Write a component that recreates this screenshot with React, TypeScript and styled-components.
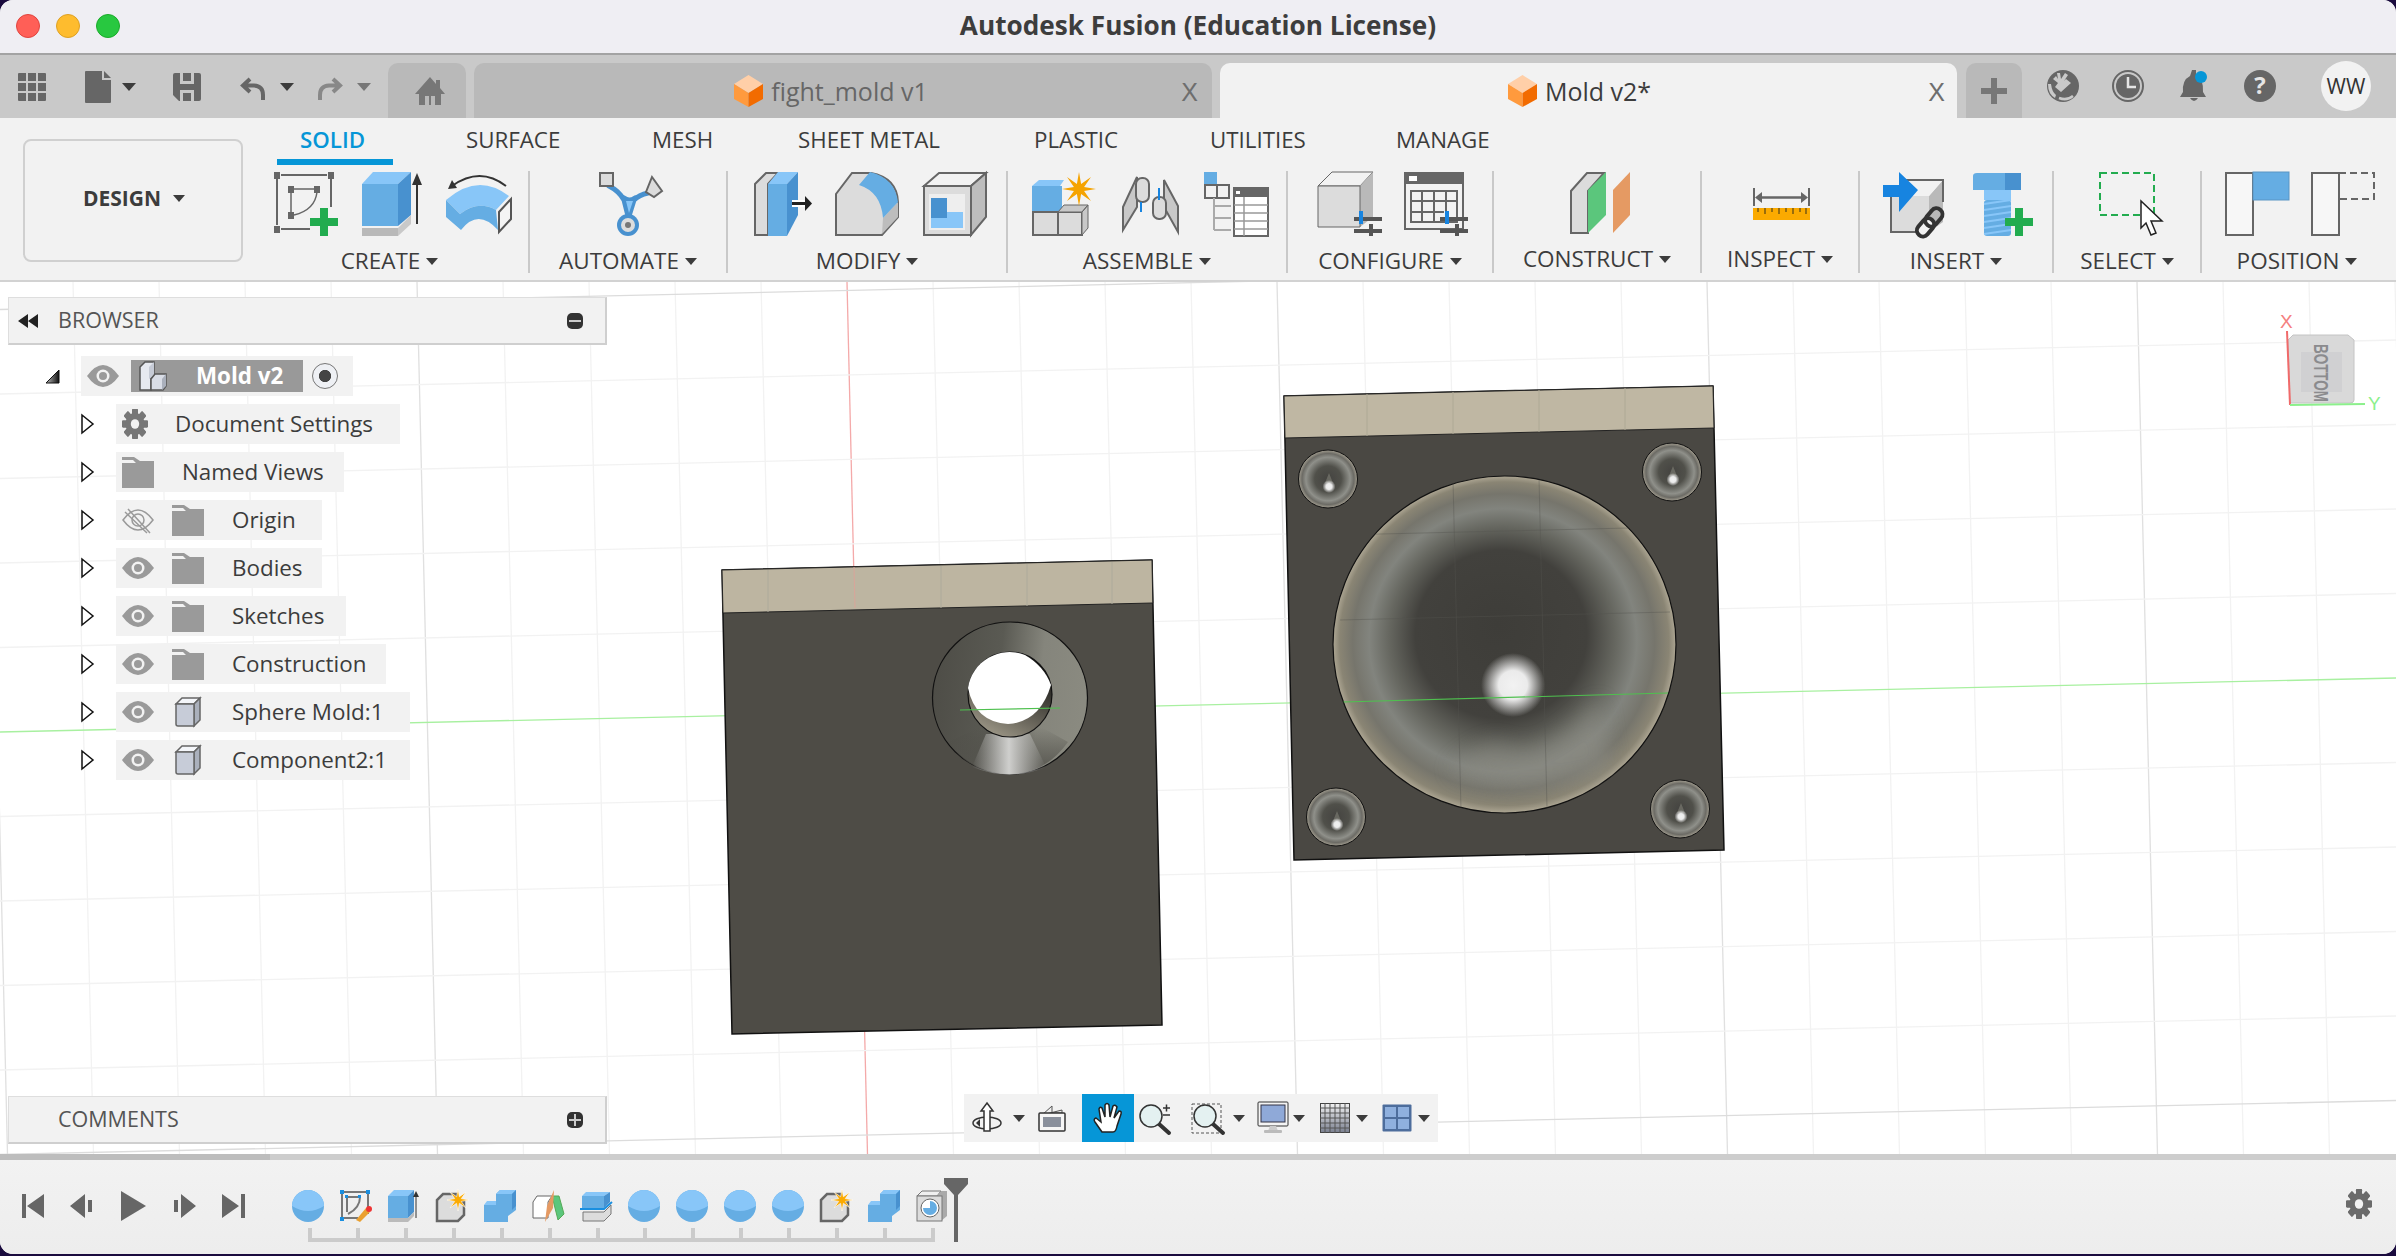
import React from "react";
import styled, { createGlobalStyle } from "styled-components";

const Global = createGlobalStyle`
  html, body { margin: 0; padding: 0; background: #1a0b3e; }
  body { font-family: "Open Sans", "Noto Sans", sans-serif; color: #3c3c3c; }
  * { box-sizing: border-box; }
`;

const Win = styled.div`
  width: 2396px; height: 1254px; display: flex; flex-direction: column;
  overflow: hidden; border-radius: 13px; background: #f2f2f2;
`;
const TitleBar = styled.header`
  height: 55px; flex: none; background: #efeef3; border-bottom: 2px solid #a3a3a3;
  display: flex; align-items: center; position: relative; justify-content: center; padding-bottom: 4px;
`;
const Lights = styled.div`
  position: absolute; left: 16px; top: 14px; display: flex; gap: 16px;
`;
const Light = styled.span<{ $c: string; $b: string }>`
  width: 24px; height: 24px; border-radius: 50%; background: ${p => p.$c}; border: 1px solid ${p => p.$b};
`;
const Title = styled.h1`
  margin: 0; font: 700 26.2px "Open Sans", sans-serif; color: #3d3d3d; letter-spacing: 0;
`;
const TabBar = styled.div`
  height: 63px; flex: none; background: #c9c9c9; display: flex; align-items: stretch; padding-top: 8px;
`;
const QuickTools = styled.div`
  width: 388px; flex: none; display: flex; align-items: flex-start; padding: 8px 0 0 18px;
`;
const QuickSlot = styled.div<{ $ml?: number }>`
  margin-left: ${p => p.$ml ?? 0}px; display: flex; align-items: center; height: 32px;
`;
const Caret = styled.span<{ $ml?: number; $s?: number; $c?: string }>`
  display: inline-block; flex: none; margin-left: ${p => p.$ml ?? 0}px;
  width: 0; height: 0;
  border-left: ${p => p.$s ?? 6}px solid transparent; border-right: ${p => p.$s ?? 6}px solid transparent;
  border-top: ${p => (p.$s ?? 6) * 1.25}px solid ${p => p.$c ?? "#3c3c3c"};
`;
const Tab = styled.div<{ $w: number; $active?: boolean; $ml?: number; $pl?: number; $pr?: number }>`
  width: ${p => p.$w}px; flex: none; margin-left: ${p => p.$ml ?? 0}px;
  padding-left: ${p => p.$pl ?? 0}px; padding-right: ${p => p.$pr ?? 0}px;
  background: ${p => (p.$active ? "#f2f2f2" : "#b9b9b9")};
  border-radius: 10px 10px 0 0; display: flex; align-items: center; justify-content: center; position: relative;
`;
const DocTitle = styled.div<{ $active?: boolean }>`
  display: flex; align-items: center; gap: 8px; font-size: 25px; color: ${p => (p.$active ? "#3c3c3c" : "#666")};
  padding-top: 1px;
`;
const TabClose = styled.span<{ $r: number }>`
  position: absolute; right: ${p => p.$r}px; top: 18px; font-size: 25px; line-height: 22px; color: #6e6e6e;
  font-family: "Liberation Sans", sans-serif;
`;
const RightTools = styled.div`
  display: flex; align-items: flex-start; padding-top: 7px; position: relative; flex: 1;
`;
const ToolSlot = styled.div<{ $ml: number }>`
  margin-left: ${p => p.$ml}px;
`;
const Avatar = styled.div`
  position: absolute; left: 299px; top: -2px; width: 50px; height: 50px; border-radius: 50%;
  background: #f2f2f2; display: flex; align-items: center; justify-content: center; font-size: 21px; color: #333;
`;
const Ribbon = styled.div`
  height: 164px; flex: none; background: #f2f2f2; border-bottom: 2px solid #d2d2d2; display: flex; padding-left: 23px;
`;
const DesignBtn = styled.button`
  width: 220px; height: 123px; margin-top: 21px; background: #f2f2f2; border: 2px solid #d0d0d0; border-radius: 8px;
  display: flex; align-items: center; justify-content: center; gap: 12px;
  font: 700 21px "Open Sans", sans-serif; color: #3c3c3c; padding: 0 0 5px 2px;
`;
const RibbonMain = styled.div`
  display: flex; flex-direction: column; flex: 1; margin-left: 8px;
`;
const RibbonTabs = styled.nav`
  height: 47px; display: flex; position: relative;
`;
const RibbonTab = styled.span<{ $x: number; $active?: boolean }>`
  position: absolute; left: ${p => p.$x}px; top: 8px; font-size: 22.3px; line-height: 28px;
  color: ${p => (p.$active ? "#0696d7" : "#3c3c3c")}; font-weight: ${p => (p.$active ? 600 : 400)};
  &::after { content: ""; display: ${p => (p.$active ? "block" : "none")}; position: absolute; left: -23px; right: -28px; top: 33px; height: 6px; background: #0696d7; }
`;
const Groups = styled.div`
  display: flex; height: 108px; padding-top: 6px;
`;
const Group = styled.div<{ $w: number; $last?: boolean }>`
  width: ${p => p.$w}px; flex: none; height: 102px; display: flex; flex-direction: column; align-items: center;
  border-right: ${p => (p.$last ? "none" : "2px solid #c9c9c9")}; position: relative;
`;
const GroupIcons = styled.div<{ $gap?: number; $h?: number; $dx?: number }>`
  height: 65px; display: flex; gap: ${p => p.$gap ?? 20}px; align-items: flex-start;
  padding-top: ${p => p.$h ?? 1}px; padding-left: ${p => p.$dx ?? 6}px;
`;
const GroupLabel = styled.div`
  display: flex; align-items: center; gap: 6px; font-size: 22.5px; line-height: 28px; color: #3c3c3c; margin-top: 11px;
`;
const Viewport = styled.main`
  flex: 1; position: relative; background: #fff; overflow: hidden;
`;
const Canvas = styled.svg`
  position: absolute; left: 0; top: 0; width: 2396px; height: 872px;
`;
const Panel = styled.section<{ $top: number }>`
  position: absolute; left: 8px; top: ${p => p.$top}px; width: 599px; height: 48px; background: #f2f2f2;
  border-right: 2px solid #cfcfcf; border-bottom: 2px solid #cfcfcf; border-top: 1px solid #dedede; border-left: 1px solid #dedede;
  display: flex; align-items: center; padding: 0 22px 0 9px;
`;
const PanelName = styled.span<{ $ml: number }>`
  font-size: 21.5px; color: #555; margin-left: ${p => p.$ml}px; flex: 1; padding-bottom: 2px;
`;
const Tree = styled.div`
  position: absolute; left: 0; top: 74px; display: flex; flex-direction: column; gap: 8px;
`;
const RowOuter = styled.div<{ $root?: boolean }>`
  display: flex; align-items: center; height: 40px; padding-left: ${p => (p.$root ? 45 : 81)}px; gap: ${p => (p.$root ? 21 : 22)}px;
`;
const Row = styled.div<{ $w: number }>`
  width: ${p => p.$w}px; height: 40px; background: #f2f2f2; display: flex; align-items: center; padding-left: 6px; flex: none;
`;
const RowLabel = styled.span<{ $ml: number }>`
  margin-left: ${p => p.$ml}px; font-size: 22.4px; color: #3c3c3c; white-space: nowrap; padding-bottom: 2px;
`;
const RowGap = styled.span<{ $w: number }>`
  width: ${p => p.$w}px; flex: none;
`;
const RootPill = styled.div`
  width: 172px; height: 32px; background: #999; margin-left: 12px; display: flex; align-items: center; padding-left: 8px; flex: none;
`;
const RootName = styled.span`
  color: #fff; font-weight: 700; font-size: 22.4px; margin-left: 29px; white-space: nowrap; padding-bottom: 2px;
`;
const Radio = styled.span`
  width: 26px; height: 26px; margin-left: 9px; border-radius: 50%; flex: none; border: 1px solid #777;
  background: radial-gradient(circle, #444 0 34%, #eef0f4 38% 70%, #c6c8ce 100%);
`;
const NavBar = styled.div`
  position: absolute; left: 964px; top: 812px; width: 474px; height: 48px; background: #f2f2f2;
  display: flex; align-items: center; padding-left: 8px;
`;
const NavSlot = styled.div<{ $ml?: number; $on?: boolean }>`
  margin-left: ${p => p.$ml ?? 0}px; display: flex; align-items: center; justify-content: center; flex: none;
  ${p => (p.$on ? "background:#0696d7;width:52px;height:48px;" : "")}
`;
const Timeline = styled.footer`
  height: 100px; flex: none; background: linear-gradient(#f2f2f2, #ededed); border-top: 6px solid #cdcdcd;
  display: flex; align-items: flex-start; position: relative; padding: 30px 0 0 22px;
`;
const TimelineProgress = styled.span`
  position: absolute; left: 0; top: -6px; width: 270px; height: 6px; background: #bdbdbd;
`;
const Transport = styled.div`
  display: flex; align-items: center; height: 32px; width: 270px; flex: none;
`;
const Track = styled.div`
  position: relative; display: flex; flex-direction: column; width: 660px;
`;
const TrackIcons = styled.div`
  display: flex; gap: 16px; height: 32px; align-items: center;
`;
const Bracket = styled.div`
  height: 14px; margin: 6px 0 0 16px; width: 627px; border-bottom: 4px solid #cbcbcb;
  display: flex; justify-content: space-between;
`;
const Tick = styled.span`
  width: 4px; height: 14px; background: #cbcbcb;
`;
const Playhead = styled.svg`
  position: absolute; left: 652px; top: -12px;
`;
const Gear = styled.span`
  position: absolute; right: 24px; top: 29px; display: flex;
`;

/* --- icons ---- */
const G = styled.svg<{ $ml?: number }>`
  display: block; flex: none; margin-left: ${p => p.$ml ?? 0}px; overflow: visible;
`;
type IP = { s?: number; ml?: number };
const mk = (w: number, h: number, body: React.ReactNode) => ({ s = 1, ml }: IP) => (
  <G $ml={ml} width={w * s} height={h * s} viewBox={`0 0 ${w} ${h}`}>{body}</G>
);
const L = "#88c6f8", M = "#65ade3", D = "#4891cf", GY = "#666", LG = "#dcdcdc", GN = "#22ac4f";
const star = (cx: number, cy: number, R: number, r: number, n: number) => {
  const a: string[] = [];
  for (let i = 0; i < n * 2; i++) {
    const t = (Math.PI * i) / n - Math.PI / 2, q = i % 2 ? r : R;
    a.push(`${(cx + q * Math.cos(t)).toFixed(1)},${(cy + q * Math.sin(t)).toFixed(1)}`);
  }
  return a.join(" ");
};
const Plus = ({ x, y }: { x: number; y: number }) => (
  <path fill={GN} d={`M${x - 14} ${y - 4}h10v-10h8v10h10v8h-10v10h-8v-10h-10z`} />
);
const Sketch = mk(64, 64, <>
  <g stroke={GY} strokeWidth="2" fill="none">
    <path d="M7 3H53M3 7V53M7 57H36M57 7V35" />
    <path strokeWidth="1.5" d="M20 17H40M17 20V40M43 20Q41 38 20 43" />
  </g>
  <g fill={GY}>
    <rect width="6" height="7" y="0" x="0" /><rect width="6" height="7" x="54" y="0" /><rect width="6" height="7" x="0" y="54" />
    <rect width="6" height="7" x="14" y="14" /><rect width="6" height="7" x="40" y="14" /><rect width="6" height="7" x="14" y="40" />
  </g>
  <Plus x={50} y={50} />
</>);
const Extrude = mk(60, 64, <>
  <rect y="12" width="36" height="42" fill={M} />
  <path fill={L} d="M0 12L11 0H49L36 12Z" /><path fill={D} d="M36 12L49 0V43L36 54Z" />
  <path fill="#b9b9b9" d="M0 56H36V64H0Z" /><path fill="#c9c9c9" d="M36 56L49 43V52L36 64Z" />
  <path stroke="#333" strokeWidth="2" d="M55 10V52" /><path fill="#333" d="M55 1L60 13H50Z" />
</>);
const Revolve = mk(66, 64, <>
  <path fill={L} d="M0 28Q32 0 63 24L50 38Q32 28 14 42Z" />
  <path fill={M} d="M0 28L14 42Q32 28 50 38L52 58Q32 36 15 58L0 45Z" />
  <path fill="#f4f4f4" stroke="#555" strokeWidth="2" d="M53 40L65 27V47L53 60Z" />
  <path fill="none" stroke="#333" strokeWidth="2" d="M6 14Q34 -6 60 14" /><path fill="#333" d="M2 17L6 8L11 16Z" />
</>);
const Automate = mk(64, 64, <>
  <g fill="none" stroke={D} strokeWidth="5" strokeLinecap="round">
    <path d="M29 44L25 28Q20 19 10 14M30 44L35 28Q40 23 49 21M25 26Q30 30 36 26" />
  </g>
  <path fill={L} d="M27 29H34L30 41Z" />
  <rect x="1" y="1" width="13" height="13" fill={LG} stroke={GY} strokeWidth="2" />
  <path d="M53 5L63 19L55 25L47 20Z" fill={LG} stroke={GY} strokeWidth="2" />
  <circle cx="29" cy="53" r="11" fill={D} /><circle cx="29" cy="53" r="7" fill="#ddd" /><circle cx="29" cy="53" r="3" fill="#777" />
</>);
const Press = mk(58, 64, <>
  <path fill={LG} stroke={GY} strokeWidth="2" d="M1 63V12L12 1H24L14 12V63Z" />
  <rect x="14" y="12" width="19" height="52" fill={M} /><path fill={L} d="M14 12L24 0H44L33 12Z" /><path fill={D} d="M33 12L44 0V43L33 64Z" />
  <rect x="38" y="28" width="14" height="7" fill="#fff" />
  <path d="M38 31.5H52" stroke="#222" strokeWidth="3" /><path d="M51 24L58 31.5L51 39Z" fill="#222" />
</>);
const Fillet = mk(65, 64, <>
  <path fill={LG} stroke={GY} strokeWidth="2" d="M1 63V22L17 1H36Q62 6 63 30V45L47 63Z" />
  <path fill="#bdbdbd" d="M48 46L63 30V45L47 62Z" />
  <path fill={M} d="M24 13L35 0Q60 6 63 30L48 46Q46 20 24 13Z" />
</>);
const Shell = mk(64, 64, <>
  <path fill="#f2f2f2" stroke={GY} strokeWidth="2" d="M1 14L16 1H63L48 14Z" />
  <path fill="#bdbdbd" stroke={GY} strokeWidth="2" d="M48 14L63 1V45L48 63Z" />
  <rect x="1" y="14" width="47" height="49" fill={LG} stroke={GY} strokeWidth="2" />
  <rect x="6" y="22" width="36" height="36" fill="#eee" />
  <path fill={L} d="M8 56V40H40V56Z" /><path fill={D} d="M8 26H24V46H8Z" />
</>);
const NewComp = mk(66, 64, <>
  <path fill={L} d="M0 14L7 8H32L28 14Z" /><rect y="14" width="30" height="26" fill={M} />
  <rect x="1" y="40" width="25" height="23" fill={LG} stroke={GY} strokeWidth="2" />
  <rect x="26" y="40" width="24" height="23" fill={LG} stroke={GY} strokeWidth="2" />
  <path d="M26 40L32 33H56L50 40ZM50 40L56 33V56L50 63Z" fill="#c8c8c8" stroke={GY} strokeWidth="1" />
  <polygon fill="#f5a300" points={star(47, 17, 17, 5.5, 8)} />
</>);
const Joint = mk(58, 64, <>
  <path fill="#c8c8c8" stroke={GY} strokeWidth="2" d="M1 35L15 5V35L1 58Z" /><path fill="#c8c8c8" stroke={GY} strokeWidth="2" d="M42 8L56 34V60L42 35Z" />
  <rect x="14" y="6" width="13" height="24" rx="6" fill={LG} stroke={GY} strokeWidth="2" />
  <rect x="31" y="25" width="13" height="22" rx="6" fill={LG} stroke={GY} strokeWidth="2" />
  <path stroke="#1784e0" strokeWidth="2" d="M19 30V40M37 16V28" />
</>);
const TableI = mk(64, 64, <>
  <rect width="13" height="13" fill={M} /><path fill="none" stroke={GY} strokeWidth="2" d="M1 13H25V26H1ZM13 13V26" />
  <path fill="none" stroke="#aaa" strokeWidth="2" d="M10 26V58M10 34H27M10 46H27M10 58H27" />
  <rect x="30" y="16" width="34" height="48" fill="#fff" stroke={GY} strokeWidth="2" /><rect x="30" y="16" width="34" height="9" fill={GY} />
  <rect x="32" y="19" width="4" height="3" fill="#fff" />
  <path stroke="#999" strokeWidth="1.5" d="M40 25V64M30 33H64M30 41H64M30 49H64M30 57H64" />
</>);
const Sliders = ({ x }: { x: number }) => <>
  <path fill="#555" d={`M${x} 45H${x + 28}V49H${x}ZM${x} 57H${x + 28}V61H${x}Z`} />
  <rect x={x + 5} y="39" width="4" height="13" fill="#1784e0" /><rect x={x + 15} y="52" width="4" height="12" fill="#555" />
</>;
const Config = mk(64, 64, <>
  <path fill="#f2f2f2" stroke={GY} strokeWidth="1" d="M0 14L14 0H55L42 14Z" /><path fill="#b9b9b9" d="M42 14L55 0V45L42 55Z" />
  <path fill={LG} stroke={GY} strokeWidth="1" d="M0 14H42V55H0Z" /><Sliders x={36} />
</>);
const ConfigT = mk(64, 64, <>
  <rect x="1" y="1" width="58" height="56" fill="#f2f2f2" stroke={GY} strokeWidth="2" /><rect width="60" height="12" fill={GY} />
  <rect x="5" y="4" width="8" height="5" fill="#fff" />
  <path fill="none" stroke={GY} strokeWidth="2" d="M7 19H53V50H7ZM7 29H53M7 40H40M18 19V50M30 19V50M42 19V40" />
  <Sliders x={36} />
</>);
const Construct = mk(60, 62, <>
  <path fill={LG} stroke={GY} strokeWidth="2" d="M1 61V19L17 1H34L18 19V61Z" />
  <path fill="#5bc67c" d="M18 18L36 0V43L18 61Z" /><path fill="#e59a63" d="M43 18L60 0V43L43 61Z" />
</>);
const Inspect = mk(58, 32, <>
  <path stroke={GY} strokeWidth="2" d="M1 0V18M56 0V18" /><path stroke={GY} strokeWidth="2.5" d="M6 9.5H51" />
  <path fill={GY} d="M2 9.5L9 4V15ZM55 9.5L48 4V15Z" />
  <rect y="20" width="57" height="12" fill="#fbaa00" />
  <path stroke="#7a5a10" strokeWidth="1.5" d="M5 20v4M12 20v6M19 20v4M26 20v6M33 20v4M40 20v6M47 20v4M53 20v6" />
</>);
const InsertL = mk(64, 64, <>
  <path fill="#b9b9b9" d="M46 24L60 8V50L46 60Z" /><path fill="#f2f2f2" d="M8 24L22 8H60L46 24Z" /><path fill={LG} d="M8 24H46V60H8Z" />
  <path fill="none" stroke={GY} strokeWidth="2" d="M8 24V60H46M22 8H60V30" />
  <path fill="#1784e0" d="M0 13H16V0L35 18L16 40V25H0Z" />
  <g fill="none" stroke="#333" strokeWidth="4" transform="rotate(-50 47 50)">
    <rect x="30" y="44" width="20" height="12" rx="6" fill="#f2f2f2" /><rect x="43" y="44" width="20" height="12" rx="6" />
  </g>
</>);
const Bolt = mk(62, 64, <>
  <path fill={M} d="M0 4Q0 1 4 1H44Q48 1 48 4V18H0Z" /><rect x="32" y="1" width="16" height="17" fill={D} />
  <rect x="11" y="18" width="27" height="10" fill={L} />
  <rect x="11" y="28" width="27" height="36" fill={M} rx="3" />
  <path stroke={L} strokeWidth="2" d="M11 32L38 28M11 38L38 34M11 44L38 40M11 50L38 46M11 56L38 52M11 62L38 58" />
  <Plus x={46} y={50} />
</>);
const SelectI = mk(68, 64, <>
  <rect x="1" y="1" width="54" height="42" fill="none" stroke={GN} strokeWidth="2" strokeDasharray="7 4" />
  <path fill="#fff" stroke="#222" strokeWidth="1.5" d="M42 29V56L47 51L52 63L57 61L52 49L63 49Z" />
</>);
const Pos1 = mk(64, 64, <>
  <rect x="1" y="1" width="27" height="62" fill="#f7f7f7" stroke={GY} strokeWidth="2" /><rect x="28" y="0" width="36" height="28" fill={M} stroke="#5a95c4" strokeWidth="1" />
</>);
const Pos2 = mk(64, 64, <>
  <rect x="1" y="1" width="27" height="62" fill="#f7f7f7" stroke={GY} strokeWidth="2" /><path fill="none" stroke={GY} strokeWidth="2" strokeDasharray="7 4" d="M28 1H63V27H28" />
</>);
const Grid9 = mk(28, 28, <path fill={GY} d="M0 1Q0 0 1 0H8V8H0ZM10 0H18V8H10ZM20 0H27Q28 0 28 1V8H20ZM0 10H8V18H0ZM10 10H18V18H10ZM20 10H28V18H20ZM0 20H8V28H1Q0 28 0 27ZM10 20H18V28H10ZM20 20H28V27Q28 28 27 28H20Z" />);
const DocI = mk(26, 32, <><path fill={GY} d="M1 0H17V9H26V31Q26 32 25 32H1Q0 32 0 31V1Q0 0 1 0Z" /><path fill={GY} d="M19 0L26 7H19Z" /></>);
const Save = mk(28, 28, <path fill={GY} fillRule="evenodd" d="M2 0H26Q28 0 28 2V26Q28 28 26 28H6L0 22V2Q0 0 2 0ZM7 0V11H21V0H18V8H10V0ZM7 28V17H21V28H18V20H10V28Z" />);
const Undo = mk(26, 26, <path fill="none" stroke={GY} strokeWidth="4" d="M10 5L3 11.5L10 18M4 11.5H14Q23 12 23 21V26" />);
const Redo = mk(26, 26, <path fill="none" stroke="#888" strokeWidth="4" d="M16 5L23 11.5L16 18M22 11.5H12Q3 12 3 21V26" />);
const Home = mk(30, 28, <path fill="#777" fillRule="evenodd" d="M15 0L21 7V3H25V11L30 17H26V28H4V17H0ZM10 28H14V19H10ZM16 28H20V19H16Z" />);
const Cube = mk(29, 32, <>
  <path fill="#ffcfa8" d="M14.5 0L29 9L14.5 18L0 9Z" /><path fill="#ff9a3d" d="M0 9L14.5 18V32L0 24Z" /><path fill="#f26b00" d="M29 9L14.5 18V32L29 24Z" />
</>);
const PlusI = mk(26, 26, <path fill="#777" d="M10 0H16V10H26V16H16V26H10V16H0V10H10Z" />);
const Ext = mk(32, 32, <>
  <circle cx="16" cy="16" r="16" fill={GY} /><path fill="#c9c9c9" d="M1 14Q1 24 8 28L9 25Q5 22 4 14ZM9 6L6 9L11 13L8 17L14 22L24 13L19 9L17 11L21 5L18 3L14 9L13 3H10L11 9Z" />
  <path fill="none" stroke="#c9c9c9" strokeWidth="2.5" d="M12 28Q20 31 26 26" />
</>);
const Clock = mk(32, 32, <>
  <circle cx="16" cy="16" r="15" fill="none" stroke={GY} strokeWidth="2" /><circle cx="16" cy="16" r="12" fill={GY} />
  <path stroke="#e5e5e5" strokeWidth="2.5" fill="none" d="M16 7V17H24" />
</>);
const Bell = mk(28, 32, <>
  <path fill={GY} d="M12 0H16V5Q24 10 23 22L26 27H0L3 22Q2 10 10 6ZM10 28H18Q14 34 10 28Z" /><circle cx="21" cy="7" r="6" fill="#0696d7" />
</>);
const Help = ({ ml }: IP) => (
  <G $ml={ml} width={32} height={32} viewBox="0 0 32 32"><circle cx="16" cy="16" r="16" fill={GY} /><text x="16" y="24" fontSize="24" fontWeight="700" fontFamily="Open Sans" textAnchor="middle" fill="#e5e5e5">?</text></G>
);
const Rewind = mk(20, 14, <path fill="#222" d="M10 0V14L0 7ZM20 0V14L10 7Z" />);
const Minus = mk(16, 16, <><rect width="16" height="16" rx="5" fill="#333" /><rect x="2" y="7" width="12" height="2" fill="#ccc" /></>);
const PlusB = mk(16, 16, <><rect width="16" height="16" rx="5" fill="#333" /><path fill="#ccc" d="M7 2H9V7H14V9H9V14H7V9H2V7H7Z" /></>);
const Eye = mk(32, 22, <><path fill="#9a9a9a" d="M0 11Q16 -11 32 11Q16 33 0 11Z" /><circle cx="16" cy="11" r="6.5" fill="#f2f2f2" /><circle cx="16" cy="11" r="4" fill="#9a9a9a" /></>);
const EyeOff = mk(32, 26, <g fill="none" stroke="#9a9a9a" strokeWidth="1.5"><path d="M1 13Q16 -7 31 13Q16 33 1 13Z" /><circle cx="16" cy="13" r="6" /><path d="M6 2L28 26M3 5L25 26" /></g>);
const Folder = mk(32, 31, <path fill="#9a9a9a" d="M0 0H12L18 4H32V31H0ZM0 3V6H14L11 3Z" />);
const GearI = ({ s = 1, c = "#777" }: IP & { c?: string }) => {
  const t = [0, 45, 90, 135, 180, 225, 270, 315];
  return <G width={26 * s} height={30 * s} viewBox="0 0 26 26" preserveAspectRatio="none">
    {t.map(a => <rect key={a} x="10" y="0" width="6" height="26" rx="1" fill={c} transform={`rotate(${a} 13 13)`} />)}
    <circle cx="13" cy="13" r="9.5" fill={c} /><circle cx="13" cy="13" r="4.2" fill="#f2f2f2" />
  </G>;
};
const BoxI = mk(26, 30, <>
  <path fill="#f4f6fa" stroke="#666" strokeWidth="1.5" d="M1 7L7 1H25L19 7Z" /><path fill="#aab0bc" stroke="#666" strokeWidth="1.5" d="M19 7L25 1V23L19 29Z" />
  <path fill="#c7ccd8" stroke="#666" strokeWidth="1.5" d="M1 7H19V29H3Q1 29 1 27Z" />
</>);
const CompI = mk(28, 30, <>
  <path fill="#e6e9f0" stroke="#555" strokeWidth="1.5" d="M1 6L6 1H15V15H12V29H1Z" /><path fill="#c6cbd6" d="M10 6L15 1V15L10 18Z" />
  <path fill="#d9dde6" stroke="#555" strokeWidth="1.5" d="M12 18L16 13H27V25L24 29H12Z" /><path fill="#aab0bc" d="M23 18L27 13V25L23 29Z" />
</>);
const TreeCaret = mk(13, 20, <path fill="#fff" stroke="#111" strokeWidth="1.5" d="M1 1L12 10L1 19Z" />);
const RootTri = mk(15, 15, <><defs><linearGradient id="rt" x1="0" x2="1" y1="0" y2="0"><stop offset="0" stopColor="#bbb" /><stop offset="1" stopColor="#111" /></linearGradient></defs><path fill="url(#rt)" stroke="#111" d="M14 1V14H1Z" /></>);
const Orbit = mk(30, 32, <>
  <ellipse cx="15" cy="21" rx="14" ry="6" fill="none" stroke="#333" strokeWidth="1.5" />
  <path fill="#fff" stroke="#333" strokeWidth="1.5" d="M15 1L21 9H18V29H12V9H9Z" /><path fill="#333" d="M4 21L8 17V25Z" />
</>);
const LookAt = mk(28, 28, <>
  <path d="M4 11L14 2V9H24V6Z" fill="#eee" stroke="#555" strokeWidth="1" />
  <rect x="1" y="9" width="26" height="18" rx="1" fill="#f6f6f6" stroke="#333" strokeWidth="1.5" /><rect x="5" y="13" width="18" height="10" fill="#8a909c" />
</>);
const Hand = mk(30, 32, <path fill="#fff" stroke="#222" strokeWidth="1.5" d="M9 30L2 20Q0 17 3 16L8 20L6 7Q7 4 9 6L12 15L12 3Q14 0 16 3L17 15L20 4Q22 2 24 5L21 16L26 9Q29 9 28 12L24 24Q23 30 20 30Z" />);
const Lens = ({ x, y }: { x: number; y: number }) => <>
  <path stroke="#333" strokeWidth="4" strokeLinecap="round" d={`M${x + 8} ${y + 8}L${x + 18} ${y + 17}`} />
  <circle cx={x} cy={y} r="11" fill="#e4f1f1" stroke="#333" strokeWidth="1.5" />
</>;
const ZoomI = mk(32, 32, <><Lens x={12} y={14} /><path stroke="#333" strokeWidth="1.5" d="M24 6H31M27.5 2.5V9.5M24 13H31" /></>);
const FitI = mk(32, 32, <><rect x="1" y="2" width="29" height="29" fill="none" stroke="#555" strokeDasharray="3 2" /><Lens x={14} y={14} /></>);
const Display = mk(30, 32, <>
  <rect x="0" y="0" width="30" height="24" rx="1" fill="#f4f4f4" stroke="#333" /><rect x="3" y="3" width="24" height="17" fill="#8fa9d8" stroke="#334" />
  <path fill="#ccc" d="M12 24H18L20 29H10Z" /><rect x="6" y="28" width="18" height="3" rx="1" fill="#bbb" />
</>);
const GridI = mk(30, 30, <>
  <defs><linearGradient id="gf" x1="0" x2="0" y1="0" y2="1"><stop offset="0" stopColor="#f2f2f2" /><stop offset="1" stopColor="#7a8090" /></linearGradient></defs>
  <rect x="0.5" y="0.5" width="29" height="29" fill="url(#gf)" stroke="#444" />
  <path stroke="#555" strokeWidth="1" d="M5 0V30M10 0V30M15 0V30M20 0V30M25 0V30M0 5H30M0 10H30M0 15H30M0 20H30M0 25H30" />
</>);
const Views = mk(30, 28, <>
  <rect x="0.5" y="0.5" width="29" height="27" fill="#4d6d9c" rx="1" />
  <path fill="#8fb0de" d="M3 3H14V13H3ZM16 3H27V13H16ZM3 15H14V25H3ZM16 15H27V25H16Z" />
</>);
const First = mk(22, 24, <path fill={GY} d="M0 0H4V24H0ZM22 0V24L5 12Z" />);
const Prev = mk(26, 24, <path fill={GY} d="M15 0V24L0 12ZM18 6H22V18H18Z" />);
const Play = mk(25, 30, <path fill={GY} d="M0 0L25 15L0 30Z" />);
const Next = mk(26, 24, <path fill={GY} d="M11 0V24L26 12ZM8 6H4V18H8Z" />);
const Last = mk(23, 24, <path fill={GY} d="M0 0L17 12L0 24ZM19 0H23V24H19Z" />);
const Sph = mk(32, 32, <><ellipse cx="16" cy="16" rx="16" ry="16" fill={M} /><path fill={L} d="M0 16A16 16 0 0 1 32 16Q16 26 0 16Z" /></>);
const MSk = mk(32, 32, <>
  <path fill="none" stroke="#777" strokeWidth="2" d="M2 2H28V24M2 2V28H18M7 7V22M7 7H20M20 7Q20 18 8 24" /><g fill="#1a8fe0"><rect width="4" height="4" /><rect x="26" width="4" height="4" /><rect y="27" width="4" height="4" /><rect x="5" y="5" width="3" height="3" /><rect x="18" y="5" width="3" height="3" /></g>
  <path fill="#eaa030" d="M20 32L16 30L26 18L30 22Z" /><circle cx="29" cy="19" r="3" fill="#e33" />
</>);
const MEx = mk(32, 32, <>
  <rect y="6" width="20" height="22" fill={M} /><path fill={L} d="M0 6L6 0H26L20 6Z" /><path fill={D} d="M20 6L26 0V22L20 28Z" />
  <path fill="#bbb" d="M0 28H20V32H0ZM20 28L26 22V26L20 32Z" /><path stroke="#333" d="M28 6V28" /><path fill="#333" d="M28 1L31 7H25Z" />
</>);
const MSt = mk(32, 32, <>
  <path fill={LG} stroke={GY} strokeWidth="2.5" d="M1 31V10L7 4H20V12H28V25L22 31Z" /><polygon fill="#fbaa00" points={star(22, 10, 11, 3.6, 8)} stroke="#fff" strokeWidth="0.6" />
</>);
const MCb = mk(32, 32, <>
  <path fill={M} d="M0 15H12V4L16 0H32V20L24 26V32H0Z" /><path fill={L} d="M12 4L16 0H32L28 4ZM0 15L3 11H12V15Z" /><path fill={D} d="M28 4L32 0V16L28 20Z" />
</>);
const MPl = mk(32, 32, <>
  <path fill="#fff" stroke="#666" d="M1 28V12L5 6H20L16 12V28Z" /><path fill="#5bc67c" stroke="#5a5" d="M20 6H27L32 24L26 30Z" /><path fill="#e59a63" d="M13 32L15 16L22 0L21 18Z" />
</>);
const MSp = mk(32, 32, <>
  <rect x="2" y="6" width="22" height="12" fill={M} /><path fill={L} d="M2 6L6 2H30L24 6Z" /><path fill={D} d="M24 6L30 2V12L24 18Z" />
  <path stroke="#1a8fe0" strokeWidth="2" fill="none" d="M0 19H24L32 12" /><path fill={LG} stroke="#777" d="M3 22H24L31 15V24L24 31H3Z" />
</>);
const MHo = mk(32, 32, <>
  <path fill="#efefef" stroke="#777" d="M1 6L6 1H25L21 6Z" /><path fill="#aaa" d="M21 6L25 1H31V26L25 31H21Z" /><rect x="1" y="6" width="25" height="25" fill={LG} stroke="#777" />
  <circle cx="14" cy="18" r="9" fill="#fff" stroke="#666" /><path fill={M} d="M14 11A7 7 0 1 1 7 18H14Z" />
</>);

const W = 2396, H = 872, BS = -282;
const vx = [] as { x: number; k: number }[];
for (let k = -11; k <= 19; k++) vx.push({ x: 847 + 86 * k, k });
const hy = [] as { y: number; k: number }[];
for (let k = -5; k <= 6; k++) hy.push({ y: 450 + 84.5 * k, k });

const Scene = () => (
  <Canvas viewBox={`0 0 ${W} ${H}`}>
    <defs>
      <radialGradient id="bowl" cx="0.5" cy="0.5" r="0.5" fx="0.48" fy="0.44">
        <stop offset="0" stopColor="#3e3d39" /><stop offset=".5" stopColor="#42413d" /><stop offset=".66" stopColor="#666760" />
        <stop offset=".78" stopColor="#82847e" /><stop offset=".88" stopColor="#76756c" /><stop offset=".96" stopColor="#8a8574" /><stop offset="1" stopColor="#ada693" />
      </radialGradient>
      <radialGradient id="spot"><stop offset="0" stopColor="#f2f2f2" /><stop offset=".45" stopColor="#ebebeb" /><stop offset="1" stopColor="#e8e8e8" stopOpacity="0" /></radialGradient>
      <radialGradient id="dim" cx=".5" cy=".5" r=".5">
        <stop offset="0" stopColor="#444340" /><stop offset=".45" stopColor="#50504a" /><stop offset=".75" stopColor="#8f908a" /><stop offset=".88" stopColor="#6c6b65" /><stop offset="1" stopColor="#a39e90" />
      </radialGradient>
      <linearGradient id="cone" x1="0" x2="1" y1="0.1" y2="0.2">
        <stop offset="0" stopColor="#4d4c46" /><stop offset=".45" stopColor="#5a5a53" /><stop offset=".72" stopColor="#85857c" /><stop offset="1" stopColor="#8a8a80" />
      </linearGradient>
      <linearGradient id="coneLow" x1="0" x2="0" y1="0" y2="1">
        <stop offset="0" stopColor="#4e4d47" stopOpacity="0" /><stop offset="1" stopColor="#55544e" />
      </linearGradient>
      <linearGradient id="glint" x1="0" x2="1" y1="0" y2="0">
        <stop offset="0" stopColor="#c9c9c7" stopOpacity="0" /><stop offset=".5" stopColor="#cfcfcd" /><stop offset="1" stopColor="#c9c9c7" stopOpacity="0" />
      </linearGradient>
      <linearGradient id="bore" x1="0" x2=".5" y1="1" y2="0">
        <stop offset="0" stopColor="#b0aa98" /><stop offset=".4" stopColor="#6f6b60" /><stop offset="1" stopColor="#161614" />
      </linearGradient>
      <filter id="softB" x="-30%" y="-30%" width="160%" height="160%"><feGaussianBlur stdDeviation="10" /></filter>
      <clipPath id="bowlClip"><ellipse cx="1504.5" cy="644.5" rx="171.5" ry="168.5" /></clipPath>
    </defs>
    {vx.map(l => <line key={l.k} x1={l.x} y1="0" x2={l.x + 20.5} y2={H} stroke={l.k === 0 ? "#f4a9a9" : l.k % 5 === 0 ? "#e0e0e0" : "#f2f2f2"} strokeWidth="1.3" />)}
    {hy.map(l => <line key={l.k} x1="0" y1={l.y} x2={W} y2={l.y - 54} stroke={l.k === 0 ? "#a8f0a0" : l.k % 5 === 0 ? "#dcdcdc" : "#f2f2f2"} strokeWidth="1.3" />)}

    <g transform={`translate(0 ${BS})`}>
      {/* left block */}
      <path fill="#4e4c46" stroke="#111" strokeWidth="1.5" d="M722 570L1152 560L1162 1025L732 1034Z" />
      <path fill="#bdb5a1" stroke="#222" strokeWidth="1" d="M722 570L1152 560L1152.8 603L723 613Z" />
      <path stroke="#adaa9b" strokeWidth="1" d="M768 570V612M941 566V608M1027 564V606M1112 562V604" />
      <path stroke="#d9a59a" strokeWidth="1" d="M854 567L855 608" />
      <ellipse cx="1010" cy="698" rx="77.5" ry="76" fill="url(#cone)" stroke="#111" strokeWidth="1.2" />
      <path d="M948 742L978 728H1043L1068 742Q1045 774 1010 774Q970 774 948 742Z" fill="url(#coneLow)" />
      <path d="M986 734H1030L1046 767Q1010 782 972 767Z" fill="url(#glint)" />
      <ellipse cx="1010" cy="694.5" rx="42" ry="42.5" fill="url(#bore)" stroke="#111" strokeWidth="1.2" />
      <path fill="#fff" d="M968 688A42 42 0 0 1 1025 655Q1044 666 1051 685Q1040 722 1008 724Q975 722 968 688Z" />
      <path stroke="#4fc04f" strokeWidth="1.2" d="M960 710L1060 708" />

      {/* right block */}
      <path fill="#4a4843" stroke="#111" strokeWidth="1.5" d="M1284 396L1713 386L1724 850L1294 860Z" />
      <path fill="#bfb7a3" stroke="#222" strokeWidth="1" d="M1284 396L1713 386L1714 428L1285 438Z" />
      <path stroke="#aea995" strokeWidth="1" d="M1367 394V436M1453 392V434M1539 390V432M1625 388V430" />
      <ellipse cx="1504.5" cy="644.5" rx="171.5" ry="168.5" fill="url(#bowl)" stroke="#111" strokeWidth="1.2" />
      <g clipPath="url(#bowlClip)">
        <path d="M1450 770Q1490 735 1505 745Q1540 765 1600 700L1610 770Q1530 800 1450 770Z" fill="#8c8c84" opacity=".6" filter="url(#softB)" />
        <path stroke="#56554f" strokeWidth="1" opacity=".4" fill="none" d="M1453 480L1461 810M1539 478L1547 808M1340 620L1670 612M1340 535L1670 527" />
        <circle cx="1513" cy="685" r="32" fill="url(#spot)" />
        <path stroke="#4fc04f" strokeWidth="1.2" d="M1343 702L1668 693" />
      </g>
      {[[1328, 479], [1672, 472], [1336, 817], [1680, 809]].map(([x, y]) => (
        <g key={x}>
          <ellipse cx={x} cy={y} rx="29.5" ry="29" fill="url(#dim)" stroke="#111" strokeWidth="1" />
          <path d={`M${x + 1} ${y - 6}L${x + 5} ${y + 4}H${x - 3}Z`} fill="#77776f" opacity=".7" />
          <circle cx={x + 1} cy={y + 7.5} r="6.5" fill="url(#spot)" />
        </g>
      ))}

      {/* view cube */}
      <path fill="#d9d9d9" stroke="#c4c4c4" d="M2288 340L2293 335H2348L2354 340V400Q2354 403 2350 403H2290Z" />
      <rect x="2301" y="352" width="41" height="40" fill="#d0d0d2" />
      <text x="0" y="0" transform="translate(2314 344) rotate(90)" fontSize="20" fontWeight="700" fontFamily="Liberation Sans" fill="#8b8b8e" textLength="58" lengthAdjust="spacingAndGlyphs">BOTTOM</text>
      <path stroke="#f06a6a" strokeWidth="2" d="M2287 331L2290 405" /><path stroke="#8cf08c" strokeWidth="2" d="M2290 405L2365 404" />
      <text x="2280" y="328" fontSize="19" fontFamily="Liberation Sans" fill="#f58080">X</text>
      <text x="2368" y="410" fontSize="19" fontFamily="Liberation Sans" fill="#8cf08c">Y</text>
    </g>
  </Canvas>
);

const tree = [
  { n: "Document Settings", w: 284, k: "gear" },
  { n: "Named Views", w: 228, k: "views" },
  { n: "Origin", w: 206, k: "off" },
  { n: "Bodies", w: 206, k: "folder" },
  { n: "Sketches", w: 230, k: "folder" },
  { n: "Construction", w: 270, k: "folder" },
  { n: "Sphere Mold:1", w: 294, k: "box" },
  { n: "Component2:1", w: 294, k: "box" },
];
const RowIcons = ({ k }: { k: string }) => {
  if (k === "gear") return <><GearI /><RowGap $w={1} /></>;
  if (k === "views") return <Folder />;
  return <>
    {k === "off" ? <EyeOff /> : <Eye />}
    <RowGap $w={18} />
    {k === "box" ? <><RowGap $w={3} /><BoxI /><RowGap $w={3} /></> : <Folder />}
  </>;
};

const App = () => (
  <>
    <Global />
    <Win>
      <TitleBar>
        <Lights>
          <Light $c="#ff5f57" $b="#e0443e" /><Light $c="#febc2e" $b="#dea123" /><Light $c="#28c840" $b="#1aab29" />
        </Lights>
        <Title>Autodesk Fusion (Education License)</Title>
      </TitleBar>
      <TabBar>
        <QuickTools>
          <QuickSlot><Grid9 /></QuickSlot>
          <QuickSlot $ml={39}><DocI /><Caret $ml={11} $s={7} /></QuickSlot>
          <QuickSlot $ml={37}><Save /></QuickSlot>
          <QuickSlot $ml={39}><Undo /><Caret $ml={14} $s={7} /></QuickSlot>
          <QuickSlot $ml={23}><Redo /><Caret $ml={14} $s={7} $c="#777" /></QuickSlot>
        </QuickTools>
        <Tab $w={78} $pl={5}><Home /></Tab>
        <Tab $w={738} $ml={8} $pr={24}><DocTitle><Cube /><span>fight_mold v1</span></DocTitle><TabClose $r={14}>X</TabClose></Tab>
        <Tab $w={737} $ml={8} $active $pr={18}><DocTitle $active><Cube /><span>Mold v2*</span></DocTitle><TabClose $r={12}>X</TabClose></Tab>
        <Tab $w={56} $ml={9}><PlusI /></Tab>
        <RightTools>
          <ToolSlot $ml={25}><Ext /></ToolSlot>
          <ToolSlot $ml={33}><Clock /></ToolSlot>
          <ToolSlot $ml={36}><Bell /></ToolSlot>
          <ToolSlot $ml={36}><Help /></ToolSlot>
          <Avatar>WW</Avatar>
        </RightTools>
      </TabBar>
      <Ribbon>
        <DesignBtn>DESIGN<Caret $s={6} /></DesignBtn>
        <RibbonMain>
          <RibbonTabs>
            <RibbonTab $x={49} $active>SOLID</RibbonTab>
            <RibbonTab $x={215}>SURFACE</RibbonTab>
            <RibbonTab $x={401}>MESH</RibbonTab>
            <RibbonTab $x={547}>SHEET METAL</RibbonTab>
            <RibbonTab $x={783}>PLASTIC</RibbonTab>
            <RibbonTab $x={959}>UTILITIES</RibbonTab>
            <RibbonTab $x={1145}>MANAGE</RibbonTab>
          </RibbonTabs>
          <Groups>
            <Group $w={279}><GroupIcons $gap={24}><Sketch /><Extrude /><Revolve /></GroupIcons><GroupLabel>CREATE<Caret $s={6} /></GroupLabel></Group>
            <Group $w={198}><GroupIcons><Automate /></GroupIcons><GroupLabel>AUTOMATE<Caret $s={6} /></GroupLabel></Group>
            <Group $w={280}><GroupIcons $gap={23}><Press /><Fillet /><Shell /></GroupIcons><GroupLabel>MODIFY<Caret $s={6} /></GroupLabel></Group>
            <Group $w={280}><GroupIcons $gap={24}><NewComp /><Joint /><TableI /></GroupIcons><GroupLabel>ASSEMBLE<Caret $s={6} /></GroupLabel></Group>
            <Group $w={206}><GroupIcons $gap={22}><Config /><ConfigT /></GroupIcons><GroupLabel>CONFIGURE<Caret $s={6} /></GroupLabel></Group>
            <Group $w={208}><GroupIcons><Construct /></GroupIcons><GroupLabel>CONSTRUCT<Caret $s={6} /></GroupLabel></Group>
            <Group $w={158}><GroupIcons $h={17} $dx={4}><Inspect /></GroupIcons><GroupLabel>INSPECT<Caret $s={6} /></GroupLabel></Group>
            <Group $w={194}><GroupIcons $gap={26}><InsertL /><Bolt /></GroupIcons><GroupLabel>INSERT<Caret $s={6} /></GroupLabel></Group>
            <Group $w={148}><GroupIcons $dx={12}><SelectI /></GroupIcons><GroupLabel>SELECT<Caret $s={6} /></GroupLabel></Group>
            <Group $w={190} $last><GroupIcons $gap={22}><Pos1 /><Pos2 /></GroupIcons><GroupLabel>POSITION<Caret $s={6} /></GroupLabel></Group>
          </Groups>
        </RibbonMain>
      </Ribbon>
      <Viewport>
        <Scene />
        <Panel $top={15}><Rewind /><PanelName $ml={20}>BROWSER</PanelName><Minus /></Panel>
        <Tree>
          <RowOuter $root>
            <RootTri />
            <Row $w={272}>
              <Eye />
              <RootPill><CompI /><RootName>Mold v2</RootName></RootPill>
              <Radio />
            </Row>
          </RowOuter>
          {tree.map(t => (
            <RowOuter key={t.n}>
              <TreeCaret />
              <Row $w={t.w}>
                <RowIcons k={t.k} />
                <RowLabel $ml={t.k === "gear" ? 26 : 28}>{t.n}</RowLabel>
              </Row>
            </RowOuter>
          ))}
        </Tree>
        <Panel $top={814}><PanelName $ml={40}>COMMENTS</PanelName><PlusB /></Panel>
        <NavBar>
          <NavSlot><Orbit /></NavSlot>
          <NavSlot $ml={11}><Caret $s={6} /></NavSlot>
          <NavSlot $ml={13}><LookAt /></NavSlot>
          <NavSlot $ml={16} $on><Hand /></NavSlot>
          <NavSlot $ml={5}><ZoomI /></NavSlot>
          <NavSlot $ml={20}><FitI /></NavSlot>
          <NavSlot $ml={10}><Caret $s={6} /></NavSlot>
          <NavSlot $ml={13}><Display /></NavSlot>
          <NavSlot $ml={5}><Caret $s={6} /></NavSlot>
          <NavSlot $ml={15}><GridI /></NavSlot>
          <NavSlot $ml={6}><Caret $s={6} /></NavSlot>
          <NavSlot $ml={14}><Views /></NavSlot>
          <NavSlot $ml={6}><Caret $s={6} /></NavSlot>
        </NavBar>
      </Viewport>
      <Timeline>
        <TimelineProgress />
        <Transport>
          <First /><Prev ml={26} /><Play ml={25} /><Next ml={24} /><Last ml={26} />
        </Transport>
        <Track>
          <TrackIcons>
            <Sph /><MSk /><MEx /><MSt /><MCb /><MPl /><MSp /><Sph /><Sph /><Sph /><Sph /><MSt /><MCb /><MHo />
          </TrackIcons>
          <Bracket>{Array.from({ length: 14 }, (_, i) => <Tick key={i} />)}</Bracket>
          <Playhead width="24" height="66" viewBox="0 0 24 66"><path fill={GY} d="M0 0H24V6L14 17H14V64H10V17L0 6Z" /></Playhead>
        </Track>
        <Gear><GearI c="#6b6b6b" /></Gear>
      </Timeline>
    </Win>
  </>
);

export default App;
